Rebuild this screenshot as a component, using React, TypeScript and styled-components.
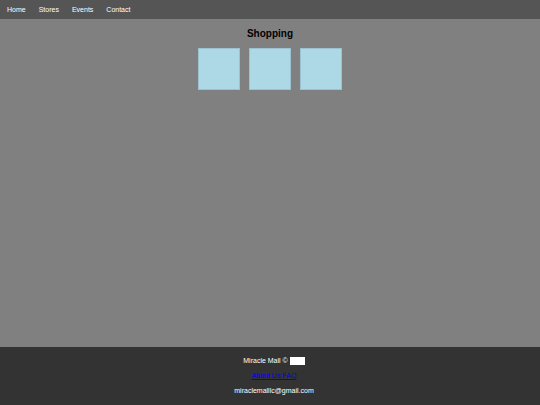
import styled, { createGlobalStyle } from 'styled-components'

const GlobalStyle = createGlobalStyle`
  html, body {
    margin: 0;
    padding: 0;
    height: 100%;
  }
  body {
    background: #808080;
    font-family: "Liberation Sans", Arial, sans-serif;
  }
  #root {
    min-height: 100%;
  }
`

const Page = styled.div`
  display: flex;
  flex-direction: column;
  min-height: 405px;
  background: #808080;
`

const NavBar = styled.nav`
  display: flex;
  align-items: center;
  height: 19px;
  padding-left: 0.5px;
  background: #555555;
`

const NavLink = styled.a`
  padding: 0 6.5px;
  font-size: 7px;
  line-height: 19px;
  color: #ffffff;
  text-decoration: none;
`

const Main = styled.main`
  flex: 1;
  display: flex;
  flex-direction: column;
  align-items: center;
  padding-top: 9px;
`

const Title = styled.h2`
  margin: 0;
  font-size: 10px;
  line-height: 12px;
  font-weight: bold;
  color: #000000;
`

const Tiles = styled.div`
  display: flex;
  gap: 9px;
  margin-top: 8px;
`

const Tile = styled.div`
  width: 42px;
  height: 42px;
  box-sizing: border-box;
  background: #add8e6;
  border: 1px solid #9cc2cf;
`

const Footer = styled.footer`
  display: flex;
  flex-direction: column;
  align-items: center;
  gap: 7px;
  height: 58px;
  box-sizing: border-box;
  padding: 10px 0 0 8px;
  background: #333333;
  color: #ffffff;
  font-size: 7px;
  line-height: 8px;
`

const Line = styled.div`
  display: flex;
  align-items: center;
  gap: 2px;
`

const Blank = styled.span`
  display: inline-block;
  width: 15px;
  height: 8px;
  background: #ffffff;
`

const FooterLink = styled.a`
  color: #0000ee;
  text-decoration: underline;
`

export default function App() {
  return (
    <Page>
      <GlobalStyle />
      <NavBar>
        {['Home', 'Stores', 'Events', 'Contact'].map((label) => (
          <NavLink key={label} href="#">{label}</NavLink>
        ))}
      </NavBar>
      <Main>
        <Title>Shopping</Title>
        <Tiles>
          <Tile />
          <Tile />
          <Tile />
        </Tiles>
      </Main>
      <Footer>
        <Line>
          <span>Miracle Mall ©</span>
          <Blank />
        </Line>
        <Line>
          <FooterLink href="#">About Us FAQ</FooterLink>
        </Line>
        <Line>miraclemalllc@gmail.com</Line>
      </Footer>
    </Page>
  )
}
